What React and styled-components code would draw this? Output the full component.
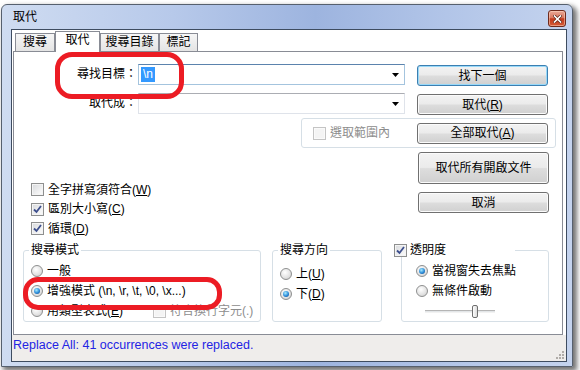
import React from 'react';
import styled, { createGlobalStyle } from 'styled-components';

const GlobalStyle = createGlobalStyle`
  html, body { margin: 0; padding: 0; background: #ffffff; }
  body {
    font-family: "Liberation Sans", "Noto Sans CJK TC", sans-serif;
    font-size: 12px;
    color: #000;
  }
  * { box-sizing: border-box; }
`;

const Screen = styled.div`
  position: relative;
  width: 580px;
  height: 370px;
  overflow: hidden;
  background: #ffffff;
  padding: 4px 0 0 1px;
`;

const Window = styled.div`
  width: 572px;
  height: 363px;
  display: flex;
  flex-direction: column;
  border: 1px solid #56606e;
  border-radius: 6px 6px 0 0;
  background: linear-gradient(90deg, #cfdcf1 0%, #b7c9ea 30%, #9db4df 55%, #b2c5e8 78%, #c4d3ee 100%);
  box-shadow: 3px 3px 5px 1px rgba(0, 0, 0, 0.55);
`;

const TitleBar = styled.div`
  height: 25px;
  display: flex;
  align-items: flex-start;
  justify-content: space-between;
`;

const Title = styled.span`
  margin: 5px 0 0 11px;
  line-height: 14px;
  color: #000;
`;

const CloseButton = styled.div`
  width: 18px;
  height: 17px;
  margin: 5px 6px 0 0;
  border: 1px solid #6e2a1d;
  border-radius: 3px;
  background: linear-gradient(#e9a897 0%, #d9775f 45%, #c23a1c 52%, #d55b38 100%);
  box-shadow: inset 0 0 0 1px rgba(255, 220, 200, 0.5);
  display: flex;
  align-items: center;
  justify-content: center;
`;

const Frame = styled.div`
  flex: 1;
  display: flex;
  padding: 0 5px 4px 9px;
`;

const Client = styled.div`
  flex: 1;
  display: flex;
  flex-direction: column;
  background: #ffffff;
  border: 1px solid #3e4c60;
`;

const TabArea = styled.div`
  flex: 1;
  display: flex;
  flex-direction: column;
  padding: 1px 3px 0 1px;
`;

const TabStrip = styled.div`
  height: 20px;
  display: flex;
  align-items: flex-end;
  padding-left: 2px;
`;

const Tab = styled.div`
  position: relative;
  z-index: ${p => (p.$active ? 1 : 0)};
  width: ${p => p.$w}px;
  height: ${p => (p.$active ? 21 : 18)}px;
  margin-bottom: ${p => (p.$active ? -1 : 0)}px;
  border: 1px solid #898c95;
  border-bottom: none;
  background: ${p => (p.$active ? '#ffffff' : 'linear-gradient(#f6f6f6, #e4e4e4)')};
  text-align: center;
  line-height: ${p => (p.$active ? 17 : 17)}px;
`;

const Panel = styled.div`
  height: 284px;
  border: 1px solid #898c95;
  background: #ffffff;
  display: flex;
  flex-direction: column;
`;

const FieldRow = styled.div`
  display: flex;
  align-items: flex-start;
  margin-top: ${p => p.$top}px;
`;

const FieldLabel = styled.div`
  width: 123px;
  text-align: right;
  line-height: 20px;
`;

const Combo = styled.div`
  width: 267px;
  height: 21px;
  margin-left: 1px;
  display: flex;
  align-items: center;
  justify-content: space-between;
  padding-left: 2px;
  border: 1px solid ${p => (p.$focused ? '#a4c4de' : '#dfe3ea')};
  border-top-color: ${p => (p.$focused ? '#5b83ad' : '#abadb3')};
  background: #ffffff;
`;

const Selected = styled.span`
  background: #3399ff;
  color: #ffffff;
  padding: 0 2px;
  line-height: 15px;
`;

const Arrow = styled.svg`
  margin-right: 5px;
`;

const Button = styled.button`
  width: 131px;
  height: ${p => p.$h || 21}px;
  margin: ${p => p.$mt || 0}px 0 0 ${p => p.$ml || 0}px;
  padding: 0;
  border: 1px solid ${p => (p.$default ? '#3c7fb1' : '#707070')};
  border-radius: 3px;
  background: linear-gradient(#f3f3f3 0%, #ebebeb 48%, #dddddd 52%, #d0d0d0 100%);
  box-shadow: inset 0 0 0 1px ${p => (p.$default ? '#98d9f9' : '#fbfbfb')};
  font: 12px "Liberation Sans", "Noto Sans CJK TC", sans-serif;
  line-height: 14px;
  color: #000;
  flex: none;
`;

const Key = styled.u`
  text-decoration: underline;
  text-underline-offset: 1px;
`;

const ScopeBox = styled.div`
  margin: 3px 0 0 287px;
  width: 255px;
  height: 30px;
  display: flex;
  align-items: center;
  justify-content: space-between;
  padding: 0 7px 0 11px;
  border: 1px solid #d6dfe6;
  border-radius: 3px;
`;

const OptionsRow = styled.div`
  display: flex;
  justify-content: space-between;
  margin-top: 4px;
  padding: 0 13px 0 17px;
`;

const CheckList = styled.div`
  display: flex;
  flex-direction: column;
  padding-top: 28px;
`;

const ButtonStack = styled.div`
  display: flex;
  flex-direction: column;
  gap: 8px;
`;

const Item = styled.div`
  display: flex;
  align-items: center;
  gap: 4px;
  height: ${p => p.$h || 20}px;
  width: ${p => (p.$w ? `${p.$w}px` : 'auto')};
  flex: none;
  white-space: nowrap;
  overflow: hidden;
  color: ${p => (p.$disabled ? '#8d8d8d' : '#000')};
  line-height: 14px;
`;

const Box = styled.span`
  width: 13px;
  height: 13px;
  flex: none;
  display: flex;
  align-items: center;
  justify-content: center;
  border: 1px solid ${p => (p.$disabled ? '#c4c4c4' : '#8e8f8f')};
  background: ${p => (p.$disabled ? '#f4f4f4' : 'linear-gradient(135deg, #d7d9dc 0%, #f7f7f7 80%)')};
  box-shadow: inset 0 0 0 1px ${p => (p.$disabled ? '#fafafa' : '#f4f4f4')};
`;

const Round = styled.span`
  width: 12px;
  height: 12px;
  flex: none;
  border-radius: 50%;
  border: 1px solid #8e8f8f;
  background: radial-gradient(circle at 40% 35%, #ffffff 0%, #e4e4e4 55%, #c8c8c8 100%);
  display: flex;
  align-items: center;
  justify-content: center;
`;

const Dot = styled.span`
  width: 6px;
  height: 6px;
  border-radius: 50%;
  background: radial-gradient(circle at 40% 35%, #a8ecff 0%, #2a8ad8 55%, #0c3f7e 100%);
`;

const GroupsRow = styled.div`
  display: flex;
  margin-top: 4.5px;
  padding-left: 9px;
`;

const Group = styled.fieldset`
  margin: 0 ${p => p.$mr || 0}px 0 0;
  padding: ${p => p.$pt}px 0 0 ${p => p.$pl}px;
  width: ${p => p.$w}px;
  height: 79px;
  min-width: 0;
  border: 1px solid #d6dfe6;
  border-radius: 3px;
`;

const Legend = styled.legend`
  padding: 0 2px;
  margin-left: -2px;
  height: 14px;
  line-height: 14px;
`;

const CheckLegend = styled.legend`
  padding: 0;
  margin-left: -22px;
  width: 121px;
  height: 14px;
  display: flex;
  align-items: center;
  gap: 3px;
  line-height: 14px;
  background: #ffffff;
`;

const ModeLine = styled.div`
  display: flex;
  align-items: center;
`;

const SliderRow = styled.div`
  height: 20px;
  display: flex;
  align-items: center;
  padding-left: 9px;
`;

const Track = styled.div`
  position: relative;
  width: 70px;
  height: 3px;
  border-top: 1px solid #b5b5b5;
  border-bottom: 1px solid #f2f2f2;
  background: #e3e6e8;
`;

const Thumb = styled.div`
  position: absolute;
  left: 47px;
  top: -6px;
  width: 6px;
  height: 13px;
  border: 1px solid #6f6f6f;
  border-radius: 2px;
  background: linear-gradient(90deg, #fdfdfd, #dcdcdc);
`;

const StatusBar = styled.div`
  height: 26px;
  flex: none;
  display: flex;
  justify-content: space-between;
  padding: 2px 0 0 1px;
  background: #efedeb;
  color: #2424e4;
  font-size: 12.5px;
  line-height: 16px;
`;

const Grip = styled.svg`
  align-self: flex-end;
  margin: 0 2px 2px 0;
`;

const Mark = styled.div`
  position: absolute;
  left: ${p => p.$x}px;
  top: ${p => p.$y}px;
  width: ${p => p.$w}px;
  height: ${p => p.$h}px;
  border: 5px solid #ec1c24;
  border-radius: ${p => p.$r}px;
  pointer-events: none;
`;

const Tick = () => (
  <svg width="9" height="9" viewBox="0 0 9 9">
    <path d="M1 4.5 L3.5 7 L8 1" fill="none" stroke="#3d4f8d" strokeWidth="1.8" />
  </svg>
);

const Check = ({ checked, disabled, children, h, w }) => (
  <Item $h={h} $w={w} $disabled={disabled}>
    <Box $disabled={disabled}>{checked && <Tick />}</Box>
    <span>{children}</span>
  </Item>
);

const Radio = ({ checked, children, w }) => (
  <Item $w={w}>
    <Round>{checked && <Dot />}</Round>
    <span>{children}</span>
  </Item>
);

const DropArrow = () => (
  <Arrow width="7" height="4" viewBox="0 0 7 4">
    <polygon points="0,0 7,0 3.5,4" fill="#000" />
  </Arrow>
);

export default function App() {
  return (
    <Screen>
      <GlobalStyle />
      <Window>
        <TitleBar>
          <Title>取代</Title>
          <CloseButton>
            <svg width="9" height="8" viewBox="0 0 9 8">
              <path d="M1.5 1 L7.5 7 M7.5 1 L1.5 7" stroke="#5a2418" strokeWidth="3" strokeLinecap="square" />
              <path d="M1.5 1 L7.5 7 M7.5 1 L1.5 7" stroke="#ffffff" strokeWidth="1.6" strokeLinecap="square" />
            </svg>
          </CloseButton>
        </TitleBar>
        <Frame>
          <Client>
            <TabArea>
              <TabStrip>
                <Tab $w={40}>搜尋</Tab>
                <Tab $w={45} $active>取代</Tab>
                <Tab $w={59}>搜尋目錄</Tab>
                <Tab $w={39}>標記</Tab>
              </TabStrip>
              <Panel>
                <FieldRow $top={12}>
                  <FieldLabel>尋找目標：</FieldLabel>
                  <Combo $focused>
                    <Selected>\n</Selected>
                    <DropArrow />
                  </Combo>
                  <Button $default $mt={1} $ml={12}>找下一個</Button>
                </FieldRow>
                <FieldRow $top={7}>
                  <FieldLabel>取代成：</FieldLabel>
                  <Combo>
                    <span />
                    <DropArrow />
                  </Combo>
                  <Button $mt={1} $ml={12}>取代(<Key>R</Key>)</Button>
                </FieldRow>
                <ScopeBox>
                  <Check disabled>選取範圍內</Check>
                  <Button>全部取代(<Key>A</Key>)</Button>
                </ScopeBox>
                <OptionsRow>
                  <CheckList>
                    <Check h={19.5}>全字拼寫須符合(<Key>W</Key>)</Check>
                    <Check h={19.5} checked>區別大小寫(<Key>C</Key>)</Check>
                    <Check h={19.5} checked>循環(<Key>D</Key>)</Check>
                  </CheckList>
                  <ButtonStack>
                    <Button $h={32}>取代所有開啟文件</Button>
                    <Button>取消</Button>
                  </ButtonStack>
                </OptionsRow>
                <GroupsRow>
                  <Group $w={238} $mr={11} $pt={4} $pl={7}>
                    <Legend>搜尋模式</Legend>
                    <Radio>一般</Radio>
                    <Radio checked>增強模式 (\n, \r, \t, \0, \x...)</Radio>
                    <ModeLine>
                      <Radio w={122}>用類型表式(<Key>E</Key>)</Radio>
                      <Check disabled w={106}>符合換行字元(.)</Check>
                    </ModeLine>
                  </Group>
                  <Group $w={110} $mr={19} $pt={7} $pl={7}>
                    <Legend>搜尋方向</Legend>
                    <Radio>上(<Key>U</Key>)</Radio>
                    <Radio checked>下(<Key>D</Key>)</Radio>
                  </Group>
                  <Group $w={148} $pt={4} $pl={14}>
                    <CheckLegend>
                      <Box><Tick /></Box>
                      <span>透明度</span>
                    </CheckLegend>
                    <Radio checked>當視窗失去焦點</Radio>
                    <Radio>無條件啟動</Radio>
                    <SliderRow>
                      <Track>
                        <Thumb />
                      </Track>
                    </SliderRow>
                  </Group>
                </GroupsRow>
              </Panel>
            </TabArea>
            <StatusBar>
              <span>Replace All: 41 occurrences were replaced.</span>
              <Grip width="9" height="9" viewBox="0 0 9 9">
                <g fill="#b0aca8">
                  <rect x="7" y="1" width="2" height="2" />
                  <rect x="4" y="4" width="2" height="2" />
                  <rect x="7" y="4" width="2" height="2" />
                  <rect x="1" y="7" width="2" height="2" />
                  <rect x="4" y="7" width="2" height="2" />
                  <rect x="7" y="7" width="2" height="2" />
                </g>
              </Grip>
            </StatusBar>
          </Client>
        </Frame>
      </Window>
      <Mark $x={55} $y={52} $w={129} $h={47} $r={17} />
      <Mark $x={23} $y={277} $w={199} $h={33} $r={15} />
    </Screen>
  );
}
